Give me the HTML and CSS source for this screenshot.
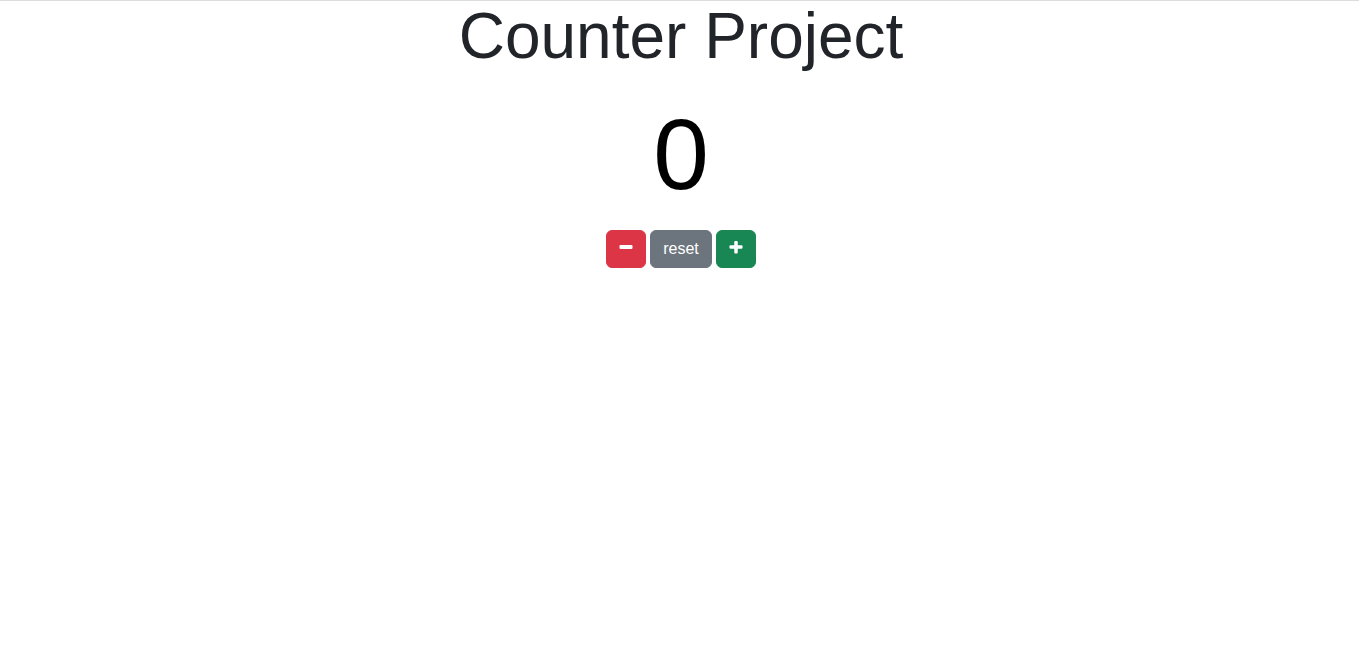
FILE: index.html
```html
<!DOCTYPE html>
<html lang="en">
<head>
<meta charset="utf-8">
<title>Counter Project</title>
<link rel="stylesheet" href="styles.css">
</head>
<body>
<main class="app">
  <h1 class="title">Counter Project</h1>
  <div class="count">0</div>
  <div class="controls">
    <button class="btn btn-danger" aria-label="decrement">
      <svg class="icon" viewBox="0 0 14 16" width="14" height="16"><rect x="0.5" y="4" width="13" height="4" rx="1" fill="currentColor"/></svg>
    </button>
    <button class="btn btn-secondary">reset</button>
    <button class="btn btn-success" aria-label="increment">
      <svg class="icon" viewBox="0 0 14 16" width="14" height="16"><rect x="0.5" y="4.25" width="13" height="3.5" rx="1" fill="currentColor"/><rect x="5.25" y="0" width="3.5" height="12.5" rx="1" fill="currentColor"/></svg>
    </button>
  </div>
</main>
</body>
</html>
```
FILE: styles.css
```css
* { box-sizing: border-box; }
html, body { margin: 0; padding: 0; }
body {
  font-family: "Liberation Sans", Arial, sans-serif;
  color: #212529;
  background: #fff;
  border-top: 1px solid #dcdcdc;
}
.app {
  display: flex;
  flex-direction: column;
  align-items: center;
  padding-left: 3px;
}
.title {
  margin: 0;
  font-size: 64px;
  font-weight: 400;
  line-height: 1.1;
}
.count {
  margin-top: 23px;
  font-size: 100px;
  line-height: 1.2;
  color: #000;
}
.controls {
  display: flex;
  gap: 4px;
  margin-top: 16px;
}
.btn {
  font-family: inherit;
  font-size: 16px;
  line-height: 24px;
  padding: 6px 12px;
  border: 1px solid transparent;
  border-radius: 6px;
  color: #fff;
  display: inline-flex;
  align-items: center;
  justify-content: center;
  cursor: pointer;
}
.icon { display: block; }
.btn-danger { background: #dc3545; border-color: #dc3545; }
.btn-secondary { background: #6c757d; border-color: #6c757d; }
.btn-success { background: #198754; border-color: #198754; }
```
